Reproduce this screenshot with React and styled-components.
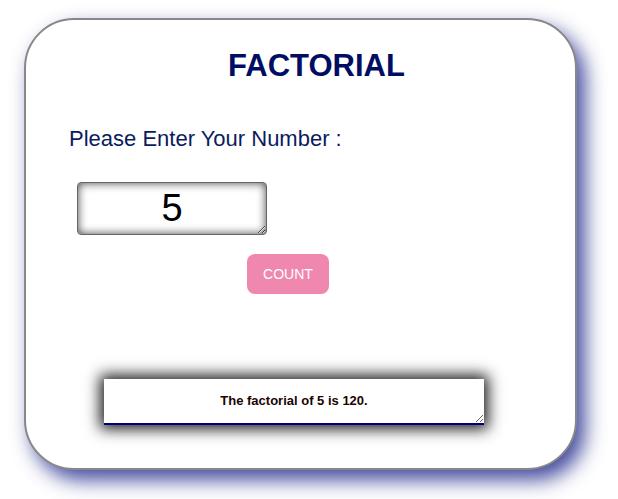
import React, { useState } from 'react';
import styled, { createGlobalStyle } from 'styled-components';

const GlobalStyle = createGlobalStyle`
  body {
    margin: 0;
    background: #fff;
    font-family: "Liberation Sans", Arial, sans-serif;
  }
`;

const Page = styled.div`
  box-sizing: border-box;
  min-height: 100vh;
  padding: 18px 0 29px 24px;
`;

const Card = styled.div`
  box-sizing: border-box;
  width: 553px;
  height: 452px;
  padding-top: 28px;
  border: 2px solid #888;
  border-radius: 50px;
  background: #fff;
  box-shadow: 8px 10px 20px rgba(35, 45, 140, 0.85);
  display: flex;
  flex-direction: column;
  align-items: flex-start;
`;

const Title = styled.h1`
  align-self: stretch;
  margin: 0;
  padding-left: 32px;
  font-size: 31px;
  line-height: 36px;
  font-weight: bold;
  text-align: center;
  color: #000d62;
`;

const Label = styled.p`
  margin: 42px 0 0 43px;
  font-size: 22px;
  line-height: 26px;
  color: #0a1c5e;
`;

const NumberInput = styled.textarea`
  box-sizing: border-box;
  width: 190px;
  height: 53px;
  margin: 30px 0 0 51px;
  padding: 3px 4px;
  border: 1px solid #666;
  border-radius: 4px;
  box-shadow: inset 0 0 10px #444;
  font-family: "Liberation Sans", Arial, sans-serif;
  font-size: 38px;
  line-height: 44px;
  text-align: center;
  color: #000;
  overflow: hidden;
  outline: none;
`;

const CountButton = styled.button`
  box-sizing: border-box;
  width: 82px;
  height: 40px;
  margin: 19px 0 0 221px;
  border: none;
  border-radius: 8px;
  background: #f087ae;
  color: #fff;
  font-family: "Liberation Sans", Arial, sans-serif;
  font-size: 14px;
  cursor: pointer;
`;

const Result = styled.textarea`
  box-sizing: border-box;
  width: 380px;
  height: 46px;
  margin: 85px 0 0 78px;
  padding: 14px 4px 0;
  border: none;
  border-bottom: 2px solid #000080;
  box-shadow: 0 0 14px 4px rgba(0, 0, 0, 0.9);
  background: #fff;
  font-family: "Liberation Sans", Arial, sans-serif;
  font-size: 13px;
  font-weight: bold;
  line-height: 15px;
  text-align: center;
  color: #1a0500;
  overflow: hidden;
  outline: none;
`;

const factorial = (n) => {
  let r = 1;
  for (let i = 2; i <= n; i++) r *= i;
  return r;
};

const App = () => {
  const [value, setValue] = useState('5');
  const [result, setResult] = useState('The factorial of 5 is 120.');

  const count = () => {
    const n = parseInt(value, 10);
    if (isNaN(n) || n < 0) {
      setResult('Please enter a valid number.');
      return;
    }
    setResult(`The factorial of ${n} is ${factorial(n)}.`);
  };

  return (
    <Page>
      <GlobalStyle />
      <Card>
        <Title>FACTORIAL</Title>
        <Label>Please Enter Your Number :</Label>
        <NumberInput value={value} onChange={(e) => setValue(e.target.value)} />
        <CountButton onClick={count}>COUNT</CountButton>
        <Result value={result} readOnly />
      </Card>
    </Page>
  );
};

export default App;
